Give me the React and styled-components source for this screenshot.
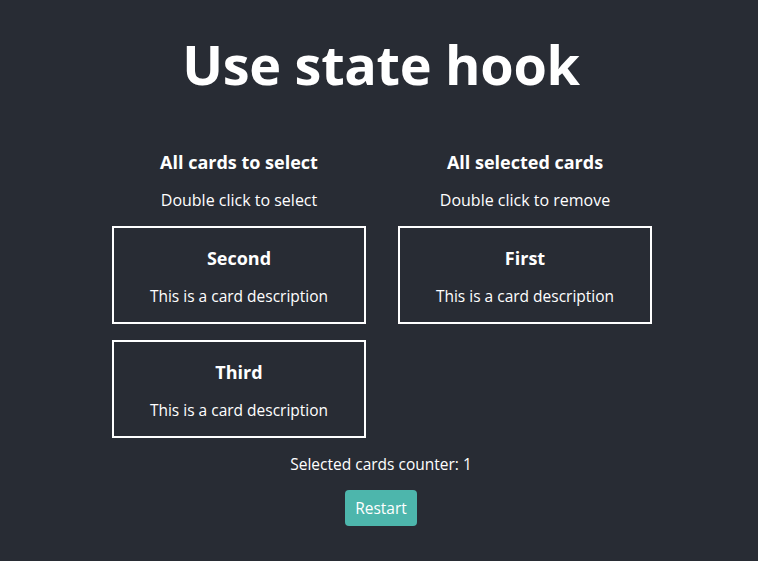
import React, { useState } from 'react'
import styled, { createGlobalStyle } from 'styled-components'

const GlobalStyle = createGlobalStyle`
    html, body {
        margin: 0;
        padding: 0;
        background: #282c34;
    }
    body {
        font-family: 'Open Sans', 'Noto Sans', sans-serif;
        color: white;
    }
`

const Page = styled.div`
    width: 100%;
    min-height: 100vh;
    display: flex;
    flex-direction: column;
    align-items: center;
    padding: 26px 0 0 4px;
    box-sizing: border-box;
`

const Title = styled.h1`
    margin: 0 0 48px;
    font-size: 54px;
    line-height: 76px;
    font-weight: bold;
    letter-spacing: -0.3px;
`

const Columns = styled.div`
    display: flex;
    gap: 32px;
    margin-left: 2px;
`

const Column = styled.div`
    width: 254px;
    display: flex;
    flex-direction: column;
    align-items: center;
`

const ColumnTitle = styled.h3`
    margin: 0;
    font-size: 18px;
    line-height: 24px;
    font-weight: bold;
`

const Hint = styled.p`
    margin: 15px 0 15px;
    font-size: 16px;
    line-height: 22px;
`

const CardList = styled.div`
    width: 100%;
    display: flex;
    flex-direction: column;
    gap: 16px;
`

const Card = styled.div`
    height: 98px;
    border: 2px solid white;
    box-sizing: border-box;
    display: flex;
    flex-direction: column;
    align-items: center;
    padding-top: 18px;
    cursor: pointer;
    user-select: none;
`

const CardTitle = styled.div`
    font-size: 18px;
    line-height: 24px;
    font-weight: bold;
`

const CardText = styled.div`
    margin-top: 15px;
    font-size: 15.5px;
    line-height: 22px;
`

const Counter = styled.p`
    margin: 15px 0 15px;
    font-size: 15.5px;
    line-height: 22px;
`

const RestartButton = styled.button`
    height: 36px;
    padding: 0 10px;
    border: none;
    border-radius: 4px;
    background: #4db6ac;
    color: white;
    font-family: inherit;
    font-size: 15.5px;
    cursor: pointer;
`

const initialCards = [
    { id: 1, title: 'First', description: 'This is a card description' },
    { id: 2, title: 'Second', description: 'This is a card description' },
    { id: 3, title: 'Third', description: 'This is a card description' },
]

const App = () => {
    const [available, setAvailable] = useState(initialCards.slice(1))
    const [selected, setSelected] = useState(initialCards.slice(0, 1))

    const selectCard = (card) => {
        setAvailable(available.filter(c => c.id !== card.id))
        setSelected([...selected, card])
    }

    const removeCard = (card) => {
        setSelected(selected.filter(c => c.id !== card.id))
        setAvailable([...available, card])
    }

    const restart = () => {
        setAvailable(initialCards)
        setSelected([])
    }

    return (
        <>
            <GlobalStyle/>
            <Page>
                <Title>Use state hook</Title>
                <Columns>
                    <Column>
                        <ColumnTitle>All cards to select</ColumnTitle>
                        <Hint>Double click to select</Hint>
                        <CardList>
                            {available.map(card => (
                                <Card key={card.id} onDoubleClick={() => selectCard(card)}>
                                    <CardTitle>{card.title}</CardTitle>
                                    <CardText>{card.description}</CardText>
                                </Card>
                            ))}
                        </CardList>
                    </Column>
                    <Column>
                        <ColumnTitle>All selected cards</ColumnTitle>
                        <Hint>Double click to remove</Hint>
                        <CardList>
                            {selected.map(card => (
                                <Card key={card.id} onDoubleClick={() => removeCard(card)}>
                                    <CardTitle>{card.title}</CardTitle>
                                    <CardText>{card.description}</CardText>
                                </Card>
                            ))}
                        </CardList>
                    </Column>
                </Columns>
                <Counter>Selected cards counter: {selected.length}</Counter>
                <RestartButton onClick={restart}>Restart</RestartButton>
            </Page>
        </>
    )
}

export default App
